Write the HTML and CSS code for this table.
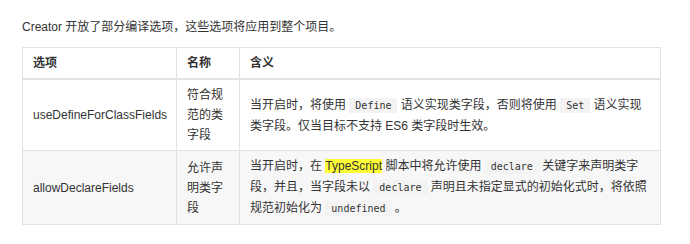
FILE: index.html
```html
<!DOCTYPE html>
<html lang="zh-CN">
<head>
    <meta charset="UTF-8">
    <meta name="viewport" content="width=device-width, initial-scale=1.0">
    <title>编译选项</title>
    <link rel="stylesheet" href="styles.css">
</head>
<body>
    <div class="doc">
        <p class="intro">Creator 开放了部分编译选项，这些选项将应用到整个项目。</p>

        <table class="options">
            <colgroup>
                <col class="col-key">
                <col class="col-name">
                <col class="col-desc">
            </colgroup>
            <thead>
                <tr>
                    <th>选项</th>
                    <th>名称</th>
                    <th>含义</th>
                </tr>
            </thead>
            <tbody>
                <tr>
                    <td>useDefineForClassFields</td>
                    <td>符合规范的类字段</td>
                    <td>当开启时，将使用 <code>Define</code> 语义实现类字段，否则将使用 <code>Set</code> 语义实现类字段。仅当目标不支持 ES6 类字段时生效。</td>
                </tr>
                <tr class="alt">
                    <td>allowDeclareFields</td>
                    <td>允许声明类字段</td>
                    <td>当开启时，在 <mark>TypeScript</mark> 脚本中将允许使用 <code>declare</code> 关键字来声明类字段，并且，当字段未以 <code>declare</code> 声明且未指定显式的初始化式时，将依照规范初始化为 <code>undefined</code> 。</td>
                </tr>
            </tbody>
        </table>
    </div>
</body>
</html>
```

FILE: styles.css
```css
* {
    box-sizing: border-box;
    margin: 0;
    padding: 0;
}

body {
    background: #fff;
    color: #333;
    font-family: 'Liberation Sans', 'Noto Sans CJK SC', sans-serif;
    font-size: 12px;
    line-height: 20px;
}

.doc {
    padding: 17px 29px 0 22px;
}

.intro {
    margin-bottom: 10px;
}

.options {
    width: 639px;
    border-collapse: collapse;
    table-layout: fixed;
}

.col-key {
    width: 154px;
}

.col-name {
    width: 63px;
}

.options th,
.options td {
    border: 1px solid #e2e2e2;
    padding: 5px 10px;
    text-align: left;
    vertical-align: middle;
}

.options th {
    font-weight: 600;
    border-bottom-width: 2px;
}

.options tr.alt td {
    background: #f7f7f7;
}

code {
    font-family: 'DejaVu Sans Mono', monospace;
    font-size: 10px;
    background: #f3f3f3;
    padding: 2px 6px;
    color: #333;
}

mark {
    background: #ffff38;
    color: #333;
}
```
